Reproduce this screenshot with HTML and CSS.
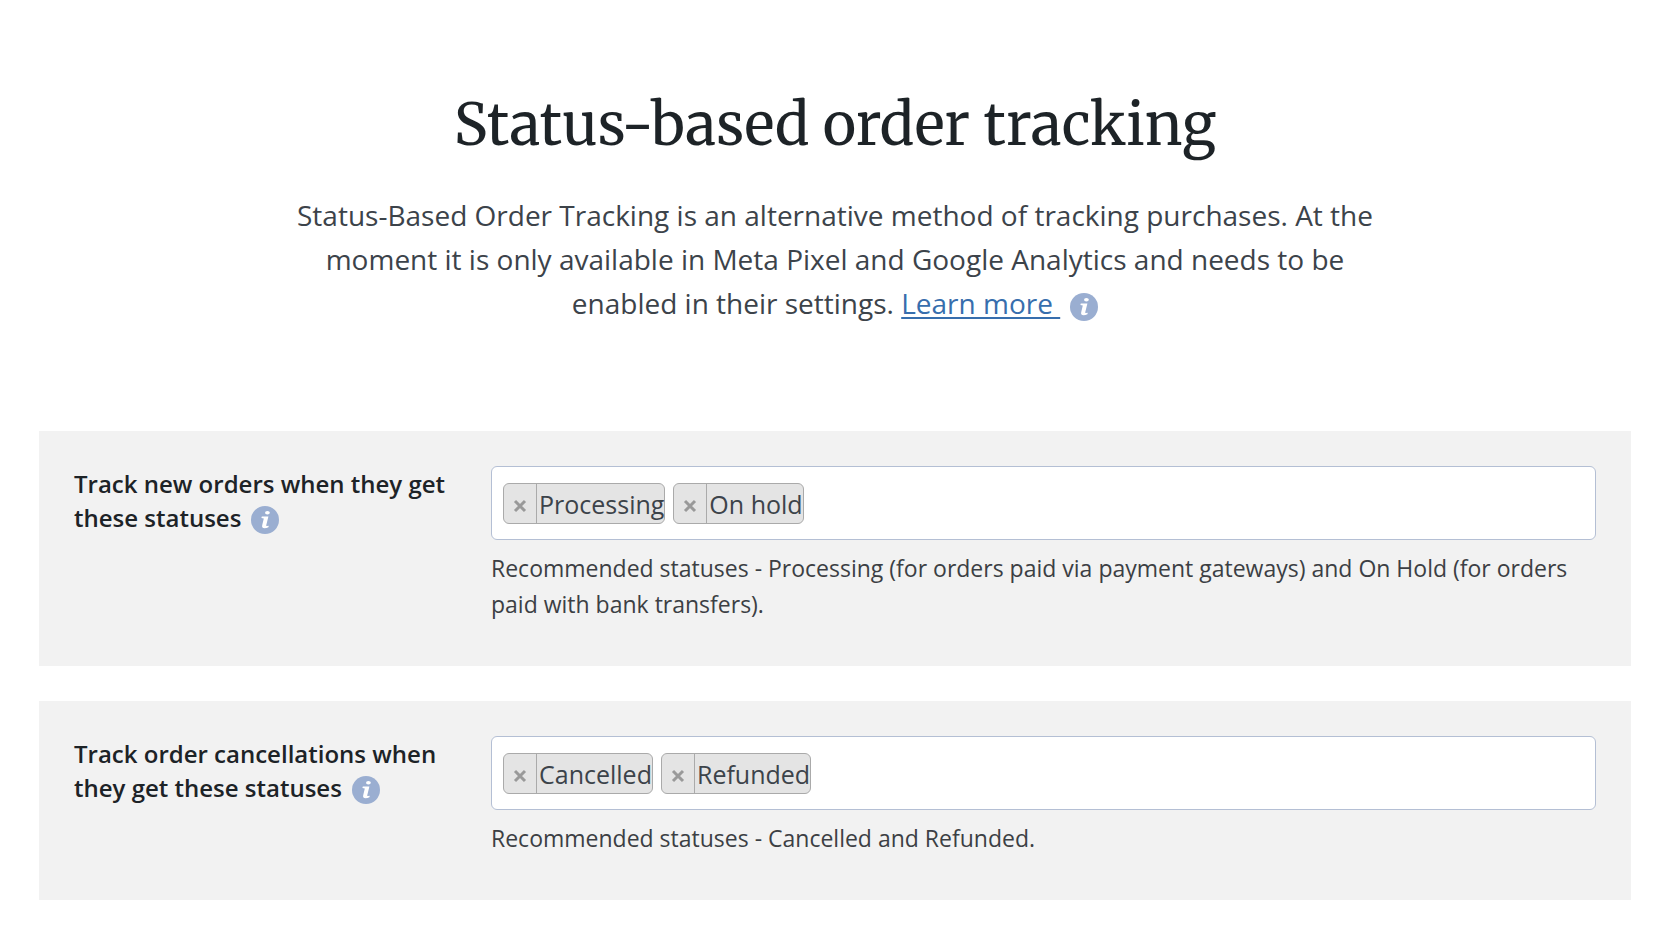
FILE: index.html
```
<!DOCTYPE html>
<html lang="en">
<head>
  <meta charset="UTF-8">
  <meta name="viewport" content="width=device-width, initial-scale=1.0">
  <link rel="stylesheet" href="styles.css">
  <title>Status-based order tracking</title>
</head>
<body>
  <svg width="0" height="0" class="sprite" aria-hidden="true">
    <symbol id="info" viewBox="0 0 28 28">
      <circle cx="14" cy="14" r="14" fill="#9aaed1"/>
      <ellipse cx="16.4" cy="6.7" rx="2.4" ry="1.8" fill="#fff"/>
      <path d="M10.8 10.5h6.6l-2.1 8.4c-.2.9.1 1.2.7 1.1l1.8-.3-.4 1.6c-1.2.6-2.5.9-3.8.9-2 0-2.9-1-2.4-3l1.6-6.6-2.4-.5z" fill="#fff"/>
    </symbol>
    <symbol id="cross" viewBox="0 0 14 14">
      <path d="M2 2l10 10M12 2L2 12" stroke="#999" stroke-width="3" fill="none"/>
    </symbol>
  </svg>

  <main class="page">
    <header class="intro">
      <h1>Status-based order tracking</h1>
      <p>Status-Based Order Tracking is an alternative method of tracking purchases. At the moment it is only available in Meta Pixel and Google Analytics and needs to be enabled in their settings. <a href="#learn-more">Learn more&nbsp;</a><button type="button" class="info-btn" aria-label="More information"><svg><use href="#info"/></svg></button></p>
    </header>

    <form class="settings">
      <section class="panel">
        <div class="panel-label">
          <span id="new-label">Track new orders when they get these statuses</span><button type="button" class="info-btn" aria-label="Help for new orders"><svg><use href="#info"/></svg></button>
        </div>
        <div class="panel-field">
          <div class="multi-select" role="group" aria-labelledby="new-label">
            <span class="tag"><button type="button" aria-label="Remove Processing"><svg><use href="#cross"/></svg></button><span>Processing</span></span>
            <span class="tag"><button type="button" aria-label="Remove On hold"><svg><use href="#cross"/></svg></button><span>On hold</span></span>
            <input type="text" aria-labelledby="new-label">
          </div>
          <p class="hint">Recommended statuses - Processing (for orders paid via payment gateways) and On Hold (for orders paid with bank transfers).</p>
        </div>
      </section>

      <section class="panel">
        <div class="panel-label">
          <span id="cancel-label">Track order cancellations when they get these statuses</span><button type="button" class="info-btn" aria-label="Help for cancellations"><svg><use href="#info"/></svg></button>
        </div>
        <div class="panel-field">
          <div class="multi-select" role="group" aria-labelledby="cancel-label">
            <span class="tag"><button type="button" aria-label="Remove Cancelled"><svg><use href="#cross"/></svg></button><span>Cancelled</span></span>
            <span class="tag"><button type="button" aria-label="Remove Refunded"><svg><use href="#cross"/></svg></button><span>Refunded</span></span>
            <input type="text" aria-labelledby="cancel-label">
          </div>
          <p class="hint">Recommended statuses - Cancelled and Refunded.</p>
        </div>
      </section>
    </form>
  </main>
</body>
</html>
```
FILE: styles.css
```
* {
  box-sizing: border-box;
}

body {
  margin: 0;
  background-color: #fff;
  color: #3c434a;
  font-family: "Segoe UI", "Open Sans", "Noto Sans", sans-serif;
  font-size: 24px;
  line-height: 36px;
}

.sprite {
  position: absolute;
}

.page {
  padding: 85px 34px 30px 39px;
}

.intro {
  max-width: 1100px;
  margin: 0 auto 106px;
  text-align: center;
}

.intro h1 {
  margin: 0 0 28px;
  color: #1d2327;
  font-family: Merriweather, "DejaVu Serif Condensed", "DejaVu Serif", serif;
  font-size: 57px;
  font-weight: 400;
  line-height: 80px;
}

.intro p {
  margin: 0;
  font-size: 28px;
  line-height: 44px;
}

.intro a {
  color: #376ead;
  text-decoration-thickness: 2px;
  text-underline-offset: 3px;
}

.info-btn {
  width: 28px;
  height: 28px;
  margin-left: 10px;
  padding: 0;
  border: none;
  background: none;
  vertical-align: -7px;
  cursor: pointer;
}

.info-btn svg {
  display: block;
  width: 28px;
  height: 28px;
}

.settings {
  display: flex;
  flex-direction: column;
  gap: 35px;
}

.panel {
  display: flex;
  gap: 32px;
  padding: 35px 35px 44px;
  background-color: #f2f2f2;
}

.panel-label {
  flex: 0 0 385px;
  padding-top: 1px;
  color: #1d2327;
  font-weight: 600;
  line-height: 34px;
}

.panel-field {
  flex: 1;
}

.multi-select {
  display: flex;
  flex-wrap: wrap;
  gap: 8px;
  padding: 16px 11px 15px;
  border: 1px solid #b4bfd4;
  border-radius: 6px;
  background-color: #fff;
}

.multi-select input {
  flex: 1;
  min-width: 40px;
  padding: 0;
  border: none;
  outline: none;
  font: inherit;
}

.tag {
  display: flex;
  align-items: center;
  height: 41px;
  border: 1px solid #aaa;
  border-radius: 6px;
  background-color: #e4e4e4;
  font-size: 25px;
}

.tag button {
  display: flex;
  align-items: center;
  justify-content: center;
  width: 33px;
  height: 100%;
  padding: 0;
  border: none;
  border-right: 1px solid #aaa;
  background: none;
  cursor: pointer;
}

.tag button svg {
  width: 14px;
  height: 14px;
  margin-top: 4px;
}

.tag span {
  padding-left: 2px;
}

.hint {
  margin: 10px 0 0;
  color: #3c3f44;
  font-size: 23px;
}
```
